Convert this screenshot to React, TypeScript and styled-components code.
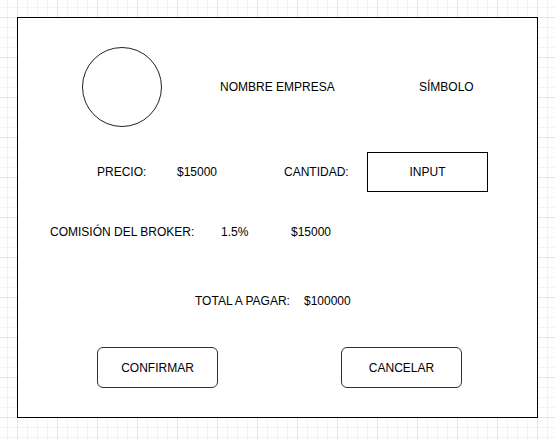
import React from "react";
import styled, { createGlobalStyle } from "styled-components";

const GlobalStyle = createGlobalStyle`
  html, body {
    margin: 0;
    padding: 0;
  }
  body {
    width: 555px;
    min-height: 440px;
    font-family: "Liberation Sans", Arial, sans-serif;
    font-size: 12px;
    color: #000;
    background-color: #ffffff;
    background-image:
      linear-gradient(to right, #e4e4e4 1px, transparent 1px),
      linear-gradient(to bottom, #e4e4e4 1px, transparent 1px),
      linear-gradient(to right, #f3f3f3 1px, transparent 1px),
      linear-gradient(to bottom, #f3f3f3 1px, transparent 1px);
    background-size: 40px 40px, 40px 40px, 10px 10px, 10px 10px;
    background-position: 17px 17px, 17px 17px, 7px 7px, 7px 7px;
  }
`;

const Page = styled.div`
  padding: 17px 0 0 17px;
`;

const Frame = styled.div`
  box-sizing: border-box;
  width: 521px;
  height: 401px;
  border: 1px solid #000;
  background: #fff;
  padding-top: 29px;
  display: flex;
  flex-direction: column;
`;

const Row = styled.div<{ $h: number; $mt?: number; $pl: number; $cols: string }>`
  display: grid;
  grid-template-columns: ${(p) => p.$cols};
  align-items: center;
  height: ${(p) => p.$h}px;
  margin-top: ${(p) => p.$mt ?? 0}px;
  padding-left: ${(p) => p.$pl}px;
`;

const ButtonRow = styled.div`
  display: flex;
  gap: 123px;
  margin-top: 26px;
  padding-left: 79px;
`;

const Logo = styled.div`
  box-sizing: border-box;
  width: 80px;
  height: 80px;
  border: 1px solid #222;
  border-radius: 50%;
`;

const Label = styled.span`
  white-space: nowrap;
  line-height: 14px;
`;

const InputBox = styled.div`
  box-sizing: border-box;
  width: 121px;
  height: 40px;
  border: 1px solid #000;
  display: flex;
  align-items: center;
  justify-content: center;
`;

const Button = styled.button`
  box-sizing: border-box;
  width: 121px;
  height: 41px;
  border: 1px solid #333;
  border-radius: 6px;
  background: #fff;
  font-family: "Liberation Sans", Arial, sans-serif;
  font-size: 12px;
  color: #000;
  padding: 0;
  display: flex;
  align-items: center;
  justify-content: center;
`;

export default function App() {
  return (
    <>
      <GlobalStyle />
      <Page>
        <Frame>
          <Row $h={80} $pl={64} $cols="138px 199px auto">
            <Logo />
            <Label>NOMBRE EMPRESA</Label>
            <Label>SÍMBOLO</Label>
          </Row>
          <Row $h={40} $mt={25} $pl={79} $cols="80px 107px 83px 121px">
            <Label>PRECIO:</Label>
            <Label>$15000</Label>
            <Label>CANTIDAD:</Label>
            <InputBox>INPUT</InputBox>
          </Row>
          <Row $h={40} $mt={20} $pl={32} $cols="171px 70px auto">
            <Label>COMISIÓN DEL BROKER:</Label>
            <Label>1.5%</Label>
            <Label>$15000</Label>
          </Row>
          <Row $h={40} $mt={29} $pl={177} $cols="109px auto">
            <Label>TOTAL A PAGAR:</Label>
            <Label>$100000</Label>
          </Row>
          <ButtonRow>
            <Button>CONFIRMAR</Button>
            <Button>CANCELAR</Button>
          </ButtonRow>
        </Frame>
      </Page>
    </>
  );
}
